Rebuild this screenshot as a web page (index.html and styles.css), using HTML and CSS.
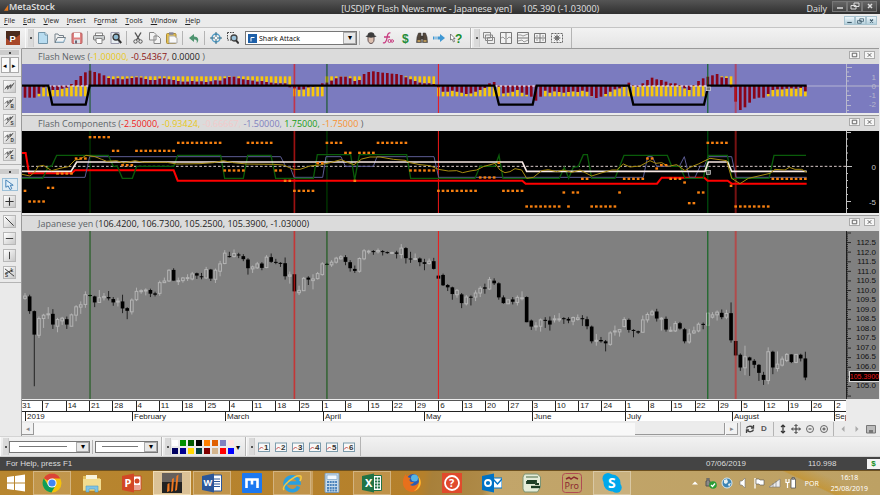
FILE: index.html
```html
<!DOCTYPE html>
<html lang="en">
<head>
  <meta charset="UTF-8">
  <meta name="viewport" content="width=device-width, initial-scale=1.0">
  <title>MetaStock</title>
  <link rel="stylesheet" href="styles.css">
</head>
<body>
  <header class="titlebar">
    <div class="brand">
      <svg class="brand-mark" viewBox="0 0 6 8"><path d="M0 8L5 1V8z" fill="#e07820"/></svg>MetaStock
    </div>
    <h1 class="doc-title"><span>[USDJPY Flash News.mwc - Japanese yen]</span><span>105.390 (-1.03000)</span></h1>
    <span class="period">Daily</span>
    <div class="win-controls">
      <button aria-label="Minimize"><svg viewBox="0 0 12 8"><path d="M3 6H9" stroke-width="1.5"/></svg></button>
      <button aria-label="Restore"><svg viewBox="0 0 12 8"><path d="M5 1H10V4.500H5zM2 3.500H7V7H2z"/></svg></button>
      <button aria-label="Close"><svg viewBox="0 0 12 8"><path d="M4 2L8 6M8 2L4 6" stroke-width="1.500"/></svg></button>
    </div>
  </header>

  <nav class="menubar">
    <button><u>F</u>ile</button>
    <button><u>E</u>dit</button>
    <button><u>V</u>iew</button>
    <button><u>I</u>nsert</button>
    <button>F<u>o</u>rmat</button>
    <button><u>T</u>ools</button>
    <button><u>W</u>indow</button>
    <button><u>H</u>elp</button>
    <div class="child-controls">
      <button aria-label="Minimize chart"><svg viewBox="0 0 12 8"><path d="M3 6H9" stroke-width="1.5"/></svg></button>
      <button aria-label="Restore chart"><svg viewBox="0 0 12 8"><path d="M5 1H10V4.500H5zM2 3.500H7V7H2z"/></svg></button>
      <button aria-label="Close chart"><svg viewBox="0 0 12 8"><path d="M4 2L8 6M8 2L4 6" stroke-width="1.500"/></svg></button>
    </div>
  </nav>

  <div class="toolbar">
    <button class="power" aria-label="Power console"><svg viewBox="0 0 12 12"><rect width="12" height="12" fill="#4a2a1c"/><path d="M0 12V6L4 9L12 3V12z" fill="#a8482a"/><text x="3" y="9" class="ico-text" fill="#fff">P</text></svg></button>
    <div class="tool-group">
      <i class="grip"></i>
      <button aria-label="New"><svg viewBox="0 0 12 12"><path d="M1.500 .5H8L10.500 3V11.500H1.500z" fill="#b8dcf0" stroke="#7396aa"/><path d="M8 .5V3H10.500" fill="#fff" stroke="#7396aa"/></svg></button>
      <button aria-label="Open"><svg viewBox="0 0 12 12"><path d="M1 10.500V2H4L5 3.500H9.500V5.500M1 10.500L3.500 5.500H11.500L9.500 10.500z" fill="#f2f2f2" stroke="#75818a"/><path d="M2 10H9.500L11 6.500" fill="none" stroke="#9cc4dc"/></svg></button>
      <button aria-label="Save"><svg viewBox="0 0 12 12"><rect x="1" y="1" width="10" height="10.500" rx="1" fill="#e08080" stroke="#b86060"/><rect x="3" y="1" width="6" height="4.500" fill="#fafafa"/><rect x="3" y="7.500" width="6" height="4" fill="#dce4e8"/><rect x="4" y="8.500" width="2" height="3" fill="#667"/></svg></button>
      <i class="sep"></i>
      <button aria-label="Print"><svg viewBox="0 0 12 12"><path d="M2.500 4V1H9.500V4" fill="#fff" stroke="#888"/><rect x=".5" y="3.500" width="11" height="4.500" rx="1" fill="#c9cccd" stroke="#777"/><path d="M3 6.500H9V11.500H4.500L3 10z" fill="#fff" stroke="#888"/></svg></button>
      <button aria-label="Print preview"><svg viewBox="0 0 12 12"><path d="M1 .5H9V11.500H1z" fill="#e8eef2" stroke="#99a"/><circle cx="6" cy="5" r="3" fill="#8cb8d0" stroke="#333" stroke-width="1.300"/><path d="M8.200 7.300L11.200 11" stroke="#333" stroke-width="2"/></svg></button>
      <i class="sep"></i>
      <button aria-label="Cut"><svg viewBox="0 0 12 12" fill="none" stroke="#555"><path d="M3 .5L7.500 8M9 .5L4.500 8" stroke-width="1.400"/><circle cx="3.500" cy="9.500" r="1.700"/><circle cx="8.500" cy="9.500" r="1.700"/></svg></button>
      <button aria-label="Copy"><svg viewBox="0 0 12 12" fill="#f3f3f3" stroke="#888"><path d="M.5 .5H5L7 2.500V8H.5zM5 4H9L11.500 6.500V11.500H5z"/></svg></button>
      <button aria-label="Paste"><svg viewBox="0 0 12 12"><rect x=".5" y="1.500" width="9.500" height="10" rx="1" fill="#e4bf4c" stroke="#a98b3c"/><rect x="3" y=".3" width="4.500" height="2.500" fill="#889"/><path d="M3 4H8.500L11 6.500V11H3z" fill="#f8f8f8" stroke="#aaa"/></svg></button>
      <i class="sep"></i>
      <button aria-label="Undo"><svg viewBox="0 0 12 12"><path d="M1 6L6 2V4.500C10 4.500 12 8 8.500 11.500C9.500 8.500 8.500 7.500 6 7.500V10z" fill="#4e9470"/></svg></button>
      <i class="sep"></i>
      <button aria-label="Crosshair"><svg viewBox="0 0 12 12" fill="none"><circle cx="6" cy="6" r="4" stroke="#4d9cc8" stroke-width="1.400"/><path d="M6 0V12M0 6H12" stroke="#33667f"/><circle cx="6" cy="6" r="1.200" fill="#fff"/></svg></button>
      <button aria-label="Zoom box"><svg viewBox="0 0 12 12" fill="none"><path d="M.5 .5H8M.5 .5V8H4" stroke="#444" stroke-dasharray="1.500 1"/><circle cx="7" cy="6" r="3" fill="#9cc4dc" stroke="#444" stroke-width="1.300"/><path d="M9 8.300L11.700 11.500" stroke="#333" stroke-width="2"/></svg></button>
      <label class="combo template">
        <svg viewBox="0 0 9 9"><rect width="9" height="9" fill="#1d5fa8"/><path d="M3 7.500V3.500H6.500" stroke="#fff" fill="none"/></svg>
        <select aria-label="Template"><option>Shark Attack</option></select>
      </label>
      <i class="sep"></i>
      <button aria-label="Expert advisor"><svg viewBox="0 0 12 12"><path d="M3 4H9V8C9 10 7.500 11.500 6 11.500S3 10 3 8z" fill="#dcc0b0" stroke="#655"/><path d="M.5 4.500C1 3.500 2 3.500 2.500 3.500C2.500 1 4 .3 6 .3S9.500 1 9.500 3.500C10 3.500 11 3.500 11.500 4.500C8 6 4 6 .5 4.500z" fill="#3c3c3c"/></svg></button>
      <button aria-label="Indicator builder"><svg viewBox="0 0 12 12" fill="none" stroke="#c83c80"><path d="M8.500 1C6 0 5.500 3 5 6S3 12 1 10.500M2 5H8" stroke-width="1.300"/><circle cx="7.500" cy="9" r="1.500"/><circle cx="10.200" cy="9" r="1.300"/></svg></button>
      <button aria-label="System tester"><svg viewBox="0 0 12 12"><text x="3" y="10.500" class="ico-dollar" fill="#248c38">$</text></svg></button>
      <button aria-label="Explorer"><svg viewBox="0 0 12 12" fill="#54483c" stroke="#333" stroke-width=".5"><path d="M2.500 1H5V5L5.500 10.500H.5L1 5zM7 1H9.500L11 5L11.500 10.500H6.500L7 5zM5 4H7V7H5z"/><path d="M1.500 9H4.500M7.500 9H10.500" stroke="#d8b060" stroke-width="1.500"/></svg></button>
      <button aria-label="Forecaster"><svg viewBox="0 0 12 12"><path d="M0 4.500H7V2L12 6L7 10V7.500H0z" fill="#3f98d4"/><path d="M2 4V8M4 4V8" stroke="#ececec"/></svg></button>
      <button aria-label="Help pointer"><svg viewBox="0 0 12 12"><path d="M.5 2L.5 8L2 7L3.500 10L4.500 9.500L3.500 6.500H5z" fill="#fff" stroke="#555" stroke-width=".7"/><text x="5" y="10.500" class="ico-dollar" fill="#168c28">?</text></svg></button>
    </div>
    <div class="tool-group">
      <i class="grip"></i>
      <button aria-label="Cascade"><svg viewBox="0 0 12 12" fill="#eee" stroke="#888"><path d="M.5 .5H7.500V6H.5zM2.500 3H9.500V8.500H2.500zM4.500 5.500H11.500V11.500H4.500z"/></svg></button>
      <button aria-label="Tile columns"><svg viewBox="0 0 12 12" fill="#f2f2f2" stroke="#777"><path d="M.5 .5H11.500V11.500H.5zM6 .5V11.500"/><path d="M1 6L3 5L5 7M7 7L9 5L11 6" stroke="#999" fill="none"/></svg></button>
      <button aria-label="Stack rows"><svg viewBox="0 0 12 12" fill="#f2f2f2" stroke="#777"><path d="M.5 .5H11.500V11.500H.5zM.5 6H11.500"/><path d="M1 3L4 3L6 4L11 2M1 9L5 8L7 10L11 8" stroke="#999" fill="none"/></svg></button>
      <button aria-label="Tile grid"><svg viewBox="0 0 12 12" fill="#f2f2f2" stroke="#777"><path d="M.5 1.500H11.500V10.500H.5zM6 1.500V10.500M.5 6H11.500"/><path d="M2 4H4M8 4H10M2 8H4M8 8H10" stroke="#999"/></svg></button>
      <button aria-label="Layout options"><svg viewBox="0 0 12 12" fill="none" stroke="#666"><path d="M.5 1.500H11.500V10.500H.5z" fill="#f2f2f2" stroke-dasharray="2 1"/><circle cx="6" cy="6" r="2"/><path d="M6 2.500V9.500M2.500 6H9.500M3.500 3.500L8.500 8.500M8.500 3.500L3.500 8.500" stroke-width=".8"/></svg></button>
    </div>
  </div>

  <main class="workspace">
    <aside class="rail">
      <div class="rail-group">
        <i class="grip-h"></i>
        <div class="pager">
          <button aria-label="Previous">&#9666;</button>
          <button aria-label="Next">&#9656;</button>
        </div>
      </div>
      <div class="rail-group">
        <button aria-label="Recalculate"><svg viewBox="0 0 12 12"><path class="scribble" d="M1 9L4 5L4 9L7 4L7 8L11 2M2 7L10 4"/></svg></button>
        <button aria-label="Buy signal"><svg viewBox="0 0 12 12"><path class="scribble" d="M1 6L4 3L4 6L7 2L7 5L10 1M2 10L9 2"/><text x="7" y="11" class="ico-tiny">B</text></svg></button>
        <button aria-label="Sell signal"><svg viewBox="0 0 12 12"><path class="scribble" d="M1 6L4 3L4 6L7 2L7 5L10 1M2 10L9 2"/><text x="7" y="11" class="ico-tiny">S</text></svg></button>
        <button aria-label="Stop signal"><svg viewBox="0 0 12 12"><path class="scribble" d="M1 6L4 3L4 6L7 2L7 5L10 1M2 10L9 2"/><text x="7" y="11" class="ico-tiny">D</text></svg></button>
        <button aria-label="Exit signal"><svg viewBox="0 0 12 12"><path class="scribble" d="M1 6L4 3L4 6L7 2L7 5L10 1M2 10L9 2"/><text x="7" y="11" class="ico-tiny">E</text></svg></button>
      </div>
      <div class="rail-group">
        <i class="grip-h"></i>
        <button class="selected" aria-label="Pointer"><svg viewBox="0 0 12 12"><path d="M2 1V9L4.500 7.500L6.500 11.500L8.500 10.500L6.800 6.800H10z" fill="#e4f2fc" stroke="#3878b0"/></svg></button>
        <button aria-label="Crosshair cursor"><svg viewBox="0 0 12 12"><path d="M6 1.500V10.500M1.500 6H10.500" stroke="#333" stroke-width="1.200"/></svg></button>
      </div>
      <div class="rail-group">
        <button aria-label="Trendline"><svg viewBox="0 0 12 12"><path d="M1.500 1.500L10.500 10.500" stroke="#333"/></svg></button>
        <button aria-label="Horizontal line"><svg viewBox="0 0 12 12"><path d="M2 6H10" stroke="#333"/></svg></button>
        <button aria-label="Vertical line"><svg viewBox="0 0 12 12"><path d="M6 2V10" stroke="#333"/></svg></button>
        <button aria-label="Short long line"><svg viewBox="0 0 12 12"><path d="M1 2L11 10M1 7L10 3" stroke="#333"/><text x="1" y="11" class="ico-tiny">S</text><text x="7" y="5" class="ico-tiny">L</text></svg></button>
      </div>
    </aside>

    <section class="charts">
      <div class="pane-head">
        <h2>Flash News (<b class="c-yellow">-1.00000, </b><b class="c-maroon">-0.54367, </b><b class="c-black">0.0000 </b>)</h2>
        <button aria-label="Maximize pane"><svg viewBox="0 0 10 8"><path d="M2.500 2H7.500V6H2.500z"/></svg></button>
        <button aria-label="Close pane"><svg viewBox="0 0 10 8"><path d="M3 2L7 6M7 2L3 6"/></svg></button>
      </div>
      <div class="pane pane-news">
        <svg class="plot" id="news" viewBox="66 192 2472 147" preserveAspectRatio="none"></svg>
        <div class="scale scale-news">
          <svg viewBox="0 0 33 49"><path d="M.5 0V49M0 3.500H6M0 12.500H5M0 22H33M0 31.500H5M0 41.500H5M0 8H3M0 17H3M0 27H3M0 36.500H3M0 46.500H3"/></svg>
          <span>1</span><span>0</span><span>-1</span><span>-2</span>
        </div>
      </div>

      <div class="pane-head">
        <h2>Flash Components (<b class="c-red">-2.50000, </b><b class="c-yellow">-0.93424, </b><b class="c-pink">-0.66667, </b><b class="c-blue">-1.50000, </b><b class="c-green">1.75000, </b><b class="c-orange">-1.75000 </b>)</h2>
        <button aria-label="Maximize pane"><svg viewBox="0 0 10 8"><path d="M2.500 2H7.500V6H2.500z"/></svg></button>
        <button aria-label="Close pane"><svg viewBox="0 0 10 8"><path d="M3 2L7 6M7 2L3 6"/></svg></button>
      </div>
      <div class="pane pane-components">
        <svg class="plot" id="components" viewBox="66 33 2472 246" preserveAspectRatio="none"></svg>
        <div class="scale scale-components">
          <svg viewBox="0 0 33 82"><path d="M.5 0V82M0 1.500H5M0 35.500H6M0 70.500H5M0 8H2M0 15H2M0 22H2M0 29H2M0 42.500H2M0 49.500H2M0 56.500H2M0 63.500H2M0 77.500H2"/></svg>
          <span>0</span><span>-5</span>
        </div>
      </div>

      <div class="pane-head">
        <h2>Japanese yen (<b class="c-black">106.4200, 106.7300, 105.2500, 105.3900, -1.03000)</b></h2>
        <button aria-label="Maximize pane"><svg viewBox="0 0 10 8"><path d="M2.500 2H7.500V6H2.500z"/></svg></button>
        <button aria-label="Close pane"><svg viewBox="0 0 10 8"><path d="M3 2L7 6M7 2L3 6"/></svg></button>
      </div>
      <div class="pane pane-price">
        <svg class="plot" id="price" viewBox="66 -27 2472 501" preserveAspectRatio="none"></svg>
        <div class="scale scale-price">
          <svg id="priceTicks" viewBox="0 0 33 167" preserveAspectRatio="none"></svg>
          <span>112.5</span><span>112.0</span><span>111.5</span><span>111.0</span><span>110.5</span><span>110.0</span><span>109.5</span><span>109.0</span><span>108.5</span><span>108.0</span><span>107.5</span><span>107.0</span><span>106.5</span><span>106.0</span><span></span><span>105.0</span>
          <strong class="last-price">105.3900</strong>
        </div>
      </div>

      <div class="dates">
        <div class="days" id="days"></div>
        <div class="months">
          <span></span><span>2019</span><span>February</span><span>March</span><span>April</span><span>May</span><span>June</span><span>July</span><span>August</span><span>Sep</span>
        </div>
      </div>

      <div class="scroll-row">
        <button class="scroll-btn" aria-label="Scroll left">&#9666;</button>
        <div class="scroll-track"><div class="scroll-thumb"></div></div>
        <button class="scroll-btn" aria-label="Scroll right">&#9656;</button>
        <i class="sep"></i>
        <button aria-label="Refresh"><svg viewBox="0 0 10 10" fill="none" stroke="#444" stroke-width="1.300"><path d="M1.500 4.500C2 2 6 1.500 8 3.500M8.500 5.500C8 8 4 8.500 2 6.500"/><path d="M8.500 1V4H6M1.500 9V6H4"/></svg></button>
        <button class="periodicity" aria-label="Periodicity">D</button>
        <i class="sep"></i>
        <button class="narrow" aria-label="Fit height"><svg viewBox="0 0 10 10"><path d="M5 1V9M3 3L5 1L7 3M3 7L5 9L7 7" stroke="#333" fill="none" stroke-width="1.200"/></svg></button>
        <button aria-label="Pan"><svg viewBox="0 0 10 10"><path d="M5 1V9M1 5H9M3.500 2L5 .5L6.500 2M3.500 8L5 9.500L6.500 8M2 3.500L.5 5L2 6.500M8 3.500L9.500 5L8 6.500" stroke="#333" fill="none"/></svg></button>
        <button aria-label="Zoom out"><svg viewBox="0 0 10 10" fill="none" stroke="#666"><circle cx="5" cy="5" r="3.500"/><path d="M3.500 5H6.500" stroke-width="1.300"/></svg></button>
        <button aria-label="Zoom in"><svg viewBox="0 0 10 10" fill="none" stroke="#666"><circle cx="5" cy="5" r="3.500"/><path d="M3.500 5H6.500M5 3.500V6.500" stroke-width="1.300"/></svg></button>
        <i class="sep"></i>
        <button aria-label="Previous chart"><svg viewBox="0 0 10 10"><path d="M6.500 2V8L3.500 5z" fill="#aaa"/></svg></button>
        <button aria-label="Next chart"><svg viewBox="0 0 10 10"><path d="M3.500 2V8L6.500 5z" fill="#aaa"/></svg></button>
        <button aria-label="Chart list"><svg viewBox="0 0 10 10"><path d="M.5 1.500H9.500V9H.5z" fill="#bbb" stroke="#777"/><path d="M3 6H7V9H3z" fill="#777"/></svg></button>
      </div>
    </section>
  </main>

  <div class="toolbar format-bar">
    <div class="tool-group">
      <i class="grip"></i>
      <label class="combo line-combo"><select aria-label="Line style"><option></option></select></label>
      <i class="sep"></i>
      <label class="combo line-combo weight"><select aria-label="Line weight"><option></option></select></label>
    </div>
    <div class="tool-group">
      <i class="grip"></i>
      <div class="palette" id="palette"></div>
      <button class="more" aria-label="More colors">&#9662;</button>
    </div>
    <div class="tool-group" id="templates">
      <i class="grip"></i>
    </div>
  </div>

  <footer class="status">
    <span class="hint">For Help, press F1</span>
    <span class="cursor-date">07/06/2019</span>
    <span class="cursor-price">110.998</span>
    <span class="dollar">$</span>
  </footer>

  <nav class="taskbar">
    <button class="start" aria-label="Start"><svg viewBox="0 0 18 18" fill="#fff"><path d="M0 3L7 2V8.500H0zM8 2L18 .5V8.500H8zM0 9.500H7V16L0 15zM8 9.500H18V17.500L8 16z"/></svg></button>
    <button class="task open" aria-label="Chrome"><svg viewBox="0 0 20 20"><circle cx="10" cy="10" r="9.500" fill="#f4c20d"/><path d="M10 10L1.800 5.200A9.500 9.500 0 0 1 18.300 5.500H10z" fill="#db4437"/><path d="M1.800 5.200A9.500 9.500 0 0 0 9.500 19.500L13.500 12.500L6 12z" fill="#0f9d58"/><circle cx="10" cy="10" r="4.600" fill="#fff"/><circle cx="10" cy="10" r="3.600" fill="#4285f4"/></svg></button>
    <button class="task" aria-label="Explorer"><svg viewBox="0 0 20 20"><path d="M1 3H7L8 5H18V18H1z" fill="#e4c05c"/><path d="M4 2H15V8H4z" fill="#f8f4dc"/><path d="M1 6H19V17H1z" fill="#f2dc90"/><path d="M4 19V13H16V19H13V16H7V19z" fill="#80c4e4" stroke="#4f9cc4" stroke-width=".6"/></svg></button>
    <button class="task" aria-label="PowerPoint"><svg viewBox="0 0 20 20"><path d="M11 3H19V17H11z" fill="#fff" stroke="#d24726"/><circle cx="15" cy="8" r="2.500" fill="#d24726"/><path d="M12 13H18M12 15H18" stroke="#d24726"/><path d="M0 3L12 .5V19.500L0 17z" fill="#d24726"/><text x="2.500" y="14" class="logo-text">P</text></svg></button>
    <button class="task active" aria-label="MetaStock"><svg viewBox="0 0 20 20"><rect width="20" height="20" fill="#222"/><rect width="20" height="9" fill="#66605c"/><path d="M5 19L5.500 11L7.500 10V18zM9 19L10 6L12 5L11 18zM13 18L14.500 3L16.500 1.500L15 17z" fill="#f07820"/></svg></button>
    <button class="task open" aria-label="Word"><svg viewBox="0 0 20 20"><path d="M10 2H19.500V18H10z" fill="#fff" stroke="#2b579a"/><path d="M12 6H18M12 8.500H18M12 11H18M12 13.500H18" stroke="#2b579a"/><path d="M0 3L12 .5V19.500L0 17z" fill="#2b579a"/><text x="1.500" y="13" class="logo-text small">W</text></svg></button>
    <button class="task" aria-label="Maxthon"><svg viewBox="0 0 20 20"><rect width="20" height="20" rx="1" fill="#1c78f0"/><path d="M4.500 15V6.500H15.500V15M10 7V11.500" stroke="#fff" stroke-width="2.600" fill="none"/></svg></button>
    <button class="task open stacked" aria-label="Internet Explorer"><svg viewBox="0 0 20 20" fill="none"><path d="M16.500 13.500A7 7 0 1 1 17 10H5.500" stroke="#2a9fe0" stroke-width="3.600"/><path d="M2 17C-1 13 14 1 18.500 3C20 4 18.500 7 18 8" stroke="#f4c840" stroke-width="1.600"/></svg></button>
    <button class="task" aria-label="Calculator"><svg viewBox="0 0 20 20"><rect x="3" y="0" width="14" height="19.500" rx="1" fill="#c8dcec" stroke="#7898b4"/><rect x="5" y="2" width="10" height="4.500" fill="#f0f8ff" stroke="#6a94bc" stroke-width=".6"/><path d="M5 9H15M5 12H15M5 15H15M5 17.500H15" stroke="#4c84bc" stroke-width="1.800" stroke-dasharray="2 .7"/></svg></button>
    <button class="task open" aria-label="Excel"><svg viewBox="0 0 20 20"><path d="M10 2.500H19.500V17.500H10z" fill="#fff" stroke="#217346"/><path d="M13 5.500H18M13 8.500H18M13 11.500H18M13 14.500H18" stroke="#217346" stroke-width="1.800" stroke-dasharray="2.200 .7"/><path d="M0 3L12 .5V19.500L0 17z" fill="#217346"/><text x="3" y="14" class="logo-text">X</text></svg></button>
    <button class="task" aria-label="Firefox"><svg viewBox="0 0 20 20"><circle cx="10" cy="10" r="9" fill="#e8701c"/><circle cx="11" cy="7.500" r="6.500" fill="#2c5cb0"/><circle cx="12.500" cy="5" r="3.500" fill="#56b4e4"/><path d="M1 8C1 5 3 2 4 1C4 4 6 4 9 5.500C7 6 7 8 9 9H12C11 11 9 11 8 12C11 14 15 12 17 9L16 15L8 18L2 14z" fill="#e8701c"/><path d="M16 3C21 8 19 16 12 18C17 14 18 9 16 3z" fill="#f8c030"/></svg></button>
    <button class="task" aria-label="Help"><svg viewBox="0 0 20 20"><rect width="20" height="20" fill="#e04a2c"/><circle cx="10" cy="10" r="7" fill="none" stroke="#fff" stroke-width="1.800"/><text x="7" y="14" class="logo-text">?</text></svg></button>
    <button class="task" aria-label="Outlook"><svg viewBox="0 0 20 20"><path d="M11 5H20V15H11z" fill="#fff" stroke="#0072c6"/><path d="M11 6L15.500 11L20 6" stroke="#0072c6" fill="none" stroke-width="1.500"/><path d="M0 3L12 .5V19.500L0 17z" fill="#0072c6"/><circle cx="6" cy="10" r="3" fill="none" stroke="#fff" stroke-width="1.800"/></svg></button>
    <button class="task" aria-label="Trading platform"><svg viewBox="0 0 20 20"><path d="M2.500 1H15.500L18.500 4V14L15.500 19H2.500L1 16V4z" fill="#e4ecd8" stroke="#7c9474"/><path d="M4 4H16" stroke="#7c9474" stroke-width="1.500"/><path d="M5 8H14V11H17M5 8V10H13" stroke="#1c3c24" stroke-width="1.800" fill="none"/><path d="M9 14H18" stroke="#1c3c24" stroke-width="2.400"/></svg></button>
    <button class="task" aria-label="Pro"><svg viewBox="0 0 20 20"><rect x=".5" y=".5" width="19" height="19" rx="3" fill="none" stroke="#b04c54"/><path d="M4 6L7 4.500L9 6L12 4L16 6" stroke="#8c2830" stroke-width="1.500" fill="none"/><text x="2.500" y="16" class="pro-text">Pro</text></svg></button>
    <button class="task open" aria-label="Skype"><svg viewBox="0 0 20 20" fill="#00a8ec"><circle cx="10" cy="10" r="8.500"/><circle cx="6" cy="5.500" r="5.500"/><circle cx="14.500" cy="14.500" r="5.200"/><text x="6" y="15" class="skype-text">S</text></svg></button>
    <div class="tray">
      <svg viewBox="0 0 12 12"><path d="M3 7.500L6 4.500L9 7.500z" fill="#fff"/></svg>
      <svg viewBox="0 0 12 12"><path d="M2 1V4H1V9H5V4H4V1" fill="#888" stroke="#555"/><circle cx="8" cy="8" r="3.800" fill="#2a9c34"/><path d="M6 8L7.500 9.500L10 6.500" stroke="#fff" fill="none" stroke-width="1.300"/></svg>
      <svg viewBox="0 0 12 12"><circle cx="6" cy="6" r="5" fill="#3c84b4" stroke="#d8e8f0"/><path d="M3 3L6 2L7 5L5 7L3 6zM7 7L10 6L8 10z" fill="#e8f0f0"/></svg>
      <svg viewBox="0 0 12 12"><path d="M3 4H5L8 1V11L5 8H3z" fill="#fff" stroke="#777" stroke-width=".6"/></svg>
      <svg viewBox="0 0 12 12"><path d="M2 1V11.500" stroke="#fff" stroke-width="1.300"/><path d="M3 2H6L7 3H11V8H7L6 7H3z" fill="#fff" stroke="#555" stroke-width=".6"/></svg>
      <svg viewBox="0 0 12 12"><path d="M0 10L11 2V10z" fill="#eee" stroke="#777" stroke-width=".6"/><path d="M4 6V10M7 4V10" stroke="#777" stroke-width=".6"/></svg>
      <svg viewBox="0 0 12 12"><path d="M6 2H10.500V11H6zM7 .5H9.500V2H7z" fill="#fff" stroke="#555" stroke-width=".8"/><path d="M2.500 11V6M1 2V5.500H4V2" stroke="#fff" fill="none" stroke-width="1.200"/></svg>
      <span class="lang">POR</span>
      <time class="clock">16:18<br>25/08/2019</time>
    </div>
  </nav>

  <script src="charts.js"></script>
</body>
</html>
```
FILE: styles.css
```css
:root {
  --chrome: #ebebeb;
  --line: #b4b4b4;
  --ui: "Noto Sans", "Open Sans", sans-serif;
  --arial: "Liberation Sans", Arial, sans-serif;
}

* {
  box-sizing: border-box;
}

body {
  margin: 0;
  min-height: 100vh;
  display: flex;
  flex-direction: column;
  background-color: var(--chrome);
  color: #222;
  font-family: var(--ui);
  font-size: 8px;
}

button {
  display: flex;
  align-items: center;
  justify-content: center;
  padding: 0;
  border: none;
  background: none;
  color: inherit;
  font: inherit;
}

h1, h2 {
  margin: 0;
  font-weight: normal;
}

svg {
  display: block;
}

.ico-text { font: bold 8px var(--arial); }
.ico-dollar { font: bold 12px var(--arial); }
.ico-tiny { font: bold 5px var(--arial); fill: #333; }
.scribble { fill: none; stroke: #555; stroke-width: 1; }
.logo-text { font: bold 11px var(--ui); fill: #fff; }
.logo-text.small { font-size: 9px; }
.pro-text { font: 9px var(--ui); fill: #8c2830; }
.skype-text { font: bold 14px var(--ui); fill: #fff; }

/* title bar */
.titlebar {
  display: flex;
  align-items: center;
  height: 14px;
  background: linear-gradient(#555, #303030);
  color: #e4e4e4;
}

.brand {
  display: flex;
  align-items: center;
  width: 60px;
  padding-left: 4px;
  font: 600 9px/12px "Open Sans", sans-serif;
}

.brand-mark {
  width: 5px;
  height: 7px;
}

.doc-title {
  flex: 1;
  display: flex;
  justify-content: center;
  gap: 10px;
  padding-left: 74px;
  padding-top: 3px;
  font: 9px/14px "Open Sans", sans-serif;
}

.period {
  margin-right: 5px;
  padding-top: 3px;
  font: 9px/14px "Open Sans", sans-serif;
}

.win-controls,
.child-controls {
  display: flex;
  margin-right: 3px;
}

.win-controls button {
  width: 15px;
  height: 11px;
  margin-top: -2px;
  border: 1px solid #777;
  background: linear-gradient(#666, #444);
}

.win-controls svg,
.child-controls svg {
  width: 12px;
  height: 8px;
  fill: none;
  stroke: #ddd;
}

/* menu */
.menubar {
  display: flex;
  align-items: center;
  gap: 8px;
  height: 14px;
  padding-left: 4px;
  border-bottom: 1px solid #c4c4c4;
  font: 7px "Open Sans", sans-serif;
}

.child-controls {
  margin-left: auto;
}

.child-controls button {
  width: 11px;
  height: 9px;
  border: 1px solid #a9c4d0;
  background: linear-gradient(#eef6fa, #b4d0dc);
}

.child-controls svg {
  stroke: #3c5868;
}

/* toolbars */
.toolbar {
  display: flex;
  align-items: stretch;
  height: 20px;
  background: linear-gradient(#f2f2f2, #e4e4e4);
}

.toolbar button {
  width: 17px;
}

.toolbar button svg {
  width: 12px;
  height: 12px;
}

.toolbar .power {
  width: 25px;
}

.toolbar .power svg {
  width: 14px;
  height: 14px;
}

.tool-group {
  display: flex;
  align-items: center;
  padding-right: 6px;
  border-left: 1px solid #fafafa;
  border-right: 1px solid var(--line);
}

.grip {
  align-self: stretch;
  width: 6px;
  margin: 1px 0 1px 2px;
  border-right: 1px solid #ccc;
  background: radial-gradient(circle, #555 1px, transparent 1px) center / 4px 4px no-repeat, #dadada;
}

.sep {
  width: 1px;
  height: 14px;
  margin: 0 2px;
  background-color: var(--line);
}

.combo {
  display: flex;
  align-items: center;
  border: 1px solid #777;
  background-color: #fff;
}

.combo select {
  flex: 1;
  min-width: 0;
  align-self: stretch;
  padding: 0 0 0 2px;
  border: none;
  border-radius: 0;
  appearance: none;
  background: none;
  color: #111;
  font: 7px var(--ui);
}

.combo::after {
  content: "▾";
  align-self: stretch;
  width: 11px;
  border: 1px solid #aaa;
  background-color: #e8e8e8;
  color: #000;
  font-size: 8px;
  line-height: 8px;
  text-align: center;
}

.template {
  width: 112px;
  height: 14px;
  margin-left: 4px;
  padding-left: 2px;
}

.template svg {
  width: 9px;
  height: 9px;
}

/* workspace */
.workspace {
  flex: 1;
  display: flex;
}

.rail {
  width: 22px;
  border-right: 1px solid #999;
  border-top: 1px solid #ccc;
  background-color: #eaeaea;
}

.rail-group {
  display: flex;
  flex-direction: column;
  align-items: center;
  gap: 4px;
  margin-bottom: 3px;
  padding: 0 2px 3px 0;
  border-bottom: 1px solid var(--line);
}

.rail-group > button {
  width: 13px;
  height: 13px;
  border: 1px solid #b8b8b8;
  background: linear-gradient(135deg, #fff, #c8c8c8);
}

.rail-group > .selected {
  width: 16px;
  border-color: #9cc0d8;
  background: #e0ecf4;
}

.rail-group svg {
  width: 11px;
  height: 11px;
}

.grip-h {
  width: 19px;
  height: 5px;
  margin-top: 1px;
  background: radial-gradient(circle, #444 1px, transparent 1px) center / 4px 4px no-repeat, #ccc;
}

.pager {
  display: flex;
  margin-top: -2px;
}

.pager button {
  width: 9px;
  height: 16px;
  border: 1px solid #aaa;
  background-color: #fafafa;
  color: #000;
  font-size: 7px;
}

.charts {
  flex: 1;
  min-width: 0;
  display: flex;
  flex-direction: column;
  margin-right: 1px;
}

.pane-head {
  display: flex;
  align-items: center;
  gap: 4px;
  height: 16px;
  padding: 0 4px 0 16px;
  background-color: #dbdbdb;
  border-top: 1px solid #999;
}

.pane-head h2 {
  flex: 1;
  color: #5c6468;
  font: 9px/14px "Open Sans", sans-serif;
  white-space: pre;
}

.pane-head b {
  font-weight: normal;
}

.pane-head button {
  width: 11px;
  height: 8px;
  margin-bottom: 4px;
  border: 1px solid #aaa;
  background-color: #f6f6f6;
}

.pane-head svg {
  width: 10px;
  height: 8px;
  fill: none;
  stroke: #555;
}

.c-yellow { color: #e8c818; }
.c-maroon { color: #8c1414; }
.c-black { color: #222; }
.c-red { color: #f01c1c; }
.c-pink { color: #f2caca; }
.c-blue { color: #8080c0; }
.c-green { color: #189c18; }
.c-orange { color: #f89030; }

.pane {
  display: flex;
  margin-bottom: 2px;
}

.plot {
  flex: 1;
  min-width: 0;
  height: 100%;
}

.pane-news {
  height: 49px;
  background-color: #7b7bbf;
  color: #b8b8cc;
}

.pane-components {
  height: 82px;
  background-color: #000;
  color: #c0c0c0;
}

.pane-price {
  flex: 1;
  min-height: 167px;
  margin-bottom: 1px;
  background-color: #808080;
  color: #111;
}

.pane-price .plot {
  height: auto;
}

.scale {
  position: relative;
  display: flex;
  flex-direction: column;
  width: 33px;
  padding-right: 3px;
  font: 8px/9px var(--arial);
  text-align: right;
}

/* ticks lie under the labels */
.scale svg {
  position: absolute;
  inset: 0;
  width: 100%;
  height: 100%;
  fill: none;
  stroke: currentColor;
}

.scale-news {
  padding-top: 9px;
}

.scale-components {
  gap: 26px;
  padding-top: 32px;
}

.scale-price {
  justify-content: space-between;
  padding-top: 7px;
  padding-bottom: 9px;
}

.scale span {
  min-height: 9px;
}

.last-price {
  position: absolute;
  right: 0;
  bottom: 17px;
  border: 1px solid #ddd;
  border-right: none;
  background-color: #000;
  color: #f01818;
  font: 7px/9px var(--arial);
}

/* date axis */
.dates {
  margin-right: 33px;
  border-top: 1px solid #555;
  background-color: #fff;
  color: #222;
  font: 8px/10px var(--arial);
}

.days,
.months {
  display: grid;
  height: 10px;
  overflow: hidden;
}

.days {
  grid-template-columns: minmax(0, 7fr) repeat(34, minmax(0, 8fr)) minmax(0, 4fr);
}

.months {
  grid-template-columns: 3fr 107fr 93fr 98fr 101fr 108fr 93fr 107fr 102fr minmax(0, 12fr);
  border-top: 1px solid #222;
}

.days span,
.months span {
  padding-left: 1px;
  border-left: 1px solid #222;
  overflow: hidden;
}

.days span:first-child {
  border-left: none;
  padding-left: 0;
}

.months span:first-child {
  border-left: none;
}

.months span:last-child {
  padding-left: 0;
}

.scroll-row {
  display: flex;
  align-items: center;
  height: 15px;
  padding-right: 1px;
}

.scroll-row button {
  width: 14px;
  height: 12px;
}

.scroll-row button.narrow {
  width: 13px;
}

.scroll-row svg {
  width: 10px;
  height: 10px;
}

.scroll-row .scroll-btn {
  width: 12px;
  border: 1px solid #999;
  border-width: 0 1px 1px 0;
  background-color: #f2f2f2;
  color: #888;
  font-size: 7px;
}

.scroll-track {
  flex: 1;
  height: 12px;
  display: flex;
  justify-content: flex-end;
  background-color: #f8f8f8;
}

.scroll-thumb {
  width: 13%;
  margin-right: 1px;
  border: 1px solid #999;
  border-width: 0 1px 1px 0;
  background-color: #ececec;
}

.scroll-row .periodicity {
  font: bold 8px var(--arial);
  color: #555;
}

/* formatting bar */
.format-bar {
  height: 21px;
  border-top: 1px solid #d4d4d4;
  border-bottom: 1px solid #d0d0d0;
}

.format-bar .tool-group {
  padding-right: 3px;
}

.line-combo {
  width: 81px;
  height: 12px;
}

.line-combo select {
  margin: 0 9px;
  background: linear-gradient(#777, #777) center / 100% 1px no-repeat;
}

.line-combo::after {
  line-height: 6px;
}

.weight {
  width: 63px;
}

.weight select {
  margin: 0 6px;
}

.palette {
  display: grid;
  grid-template-columns: repeat(8, 6px);
  grid-auto-rows: 6px;
  gap: 2px;
  margin-left: 1px;
}

.toolbar .palette button {
  width: 6px;
  height: 6px;
}

.toolbar .more {
  width: 8px;
  color: #000;
}

.t-num {
  font: bold 8px var(--arial);
  fill: #333;
}

/* status */
.status {
  display: flex;
  align-items: center;
  height: 13px;
  padding-left: 6px;
  background-color: #444;
  color: #ddd;
  font: 8px/12px var(--arial);
}

.hint {
  flex: 1;
}

.cursor-date {
  margin-right: 62px;
}

.cursor-price {
  width: 59px;
}

.dollar {
  width: 13px;
  background-color: #f4f4f4;
  color: #109020;
  font-weight: bold;
  line-height: 10px;
  text-align: center;
}

/* taskbar */
.taskbar {
  display: flex;
  height: 25px;
  border-top: 1px solid #6c5020;
  background:
    linear-gradient(25deg, transparent 72%, rgba(200, 140, 20, 0.5) 73%, transparent 82%) right / 300px 100% no-repeat,
    linear-gradient(100deg, #b8862f 0%, #b5802b 48%, #a8803a 49%, #ae8a48 55%, #c2a56a 56%, #bda164 100%);
}

.taskbar .start {
  width: 32px;
}

.start svg {
  width: 18px;
  height: 18px;
}

.task {
  width: 38px;
  margin: 0 1px;
  border: 1px solid transparent;
}

.task svg {
  width: 20px;
  height: 20px;
}

.task.open {
  border-color: rgba(255, 255, 255, 0.3);
  background-color: rgba(255, 255, 255, 0.14);
}

.task.active {
  border-color: #f0dcb4;
  background-color: rgba(255, 255, 255, 0.5);
}

.task.stacked {
  box-shadow: 2px 0 0 rgba(255, 255, 255, 0.25);
}

.tray {
  display: flex;
  align-items: center;
  gap: 4px;
  margin-left: auto;
  padding-right: 12px;
  color: #fff;
  font: 7px/11px var(--ui);
}

.tray svg {
  width: 12px;
  height: 12px;
}

.lang {
  margin: 0 8px 0 4px;
}

.clock {
  text-align: center;
}
```
FILE: charts.js
```javascript
// One trading day is STEP units wide, three units per screen pixel.
const STEP = 13.935;
const FIRST = 75;
const x = i => FIRST + STEP * i;

const rect = (cx, y, w, h, fill) =>
  `<rect x="${cx - w / 2}" y="${y}" width="${w}" height="${h}" fill="${fill}"/>`;
const line = (points, color, width) =>
  `<polyline points="${points}" fill="none" stroke="${color}" stroke-width="${width}"/>`;

// [day, color, width, opacity]
const signals = [
  [14, '#005000', 4, 0.65], [58, '#e01818', 5, 0.7], [65, '#005000', 5, 0.55],
  [89, '#f01818', 3, 1], [147, '#006010', 3, 1], [153, '#d82020', 6, 0.55]
];

function signalLines(top, height) {
  return signals.map(([i, color, w, o]) => `<g opacity="${o}">${rect(x(i), top, w, height, color)}</g>`).join('');
}

// Flash News histogram
const ZERO = 257;
const news = [
  293, 293, 293, 281, 262, 257, 270, 270, 266, 263, 252, 240, 228, 217, 212, 216, 220, 226, 234, 238,
  235, 238, 236, 234, 232, 233, 237, 240, 240, 236, 235, 238, 240, 243, 245, 245, 243, 245, 244, 246,
  244, 241, 242, 235, 231, 230, 235, 238, 240, 242, 245, 243, 246, 248, 250, 250, 250, 262, 265, 269,
  268, 262, 260, 258, 250, 248, 242, 235, 230, 230, 235, 243, 240, 222, 216, 214, 216, 218, 219, 221,
  222, 225, 232, 238, 243, 248, 250, 250, 252, 262, 275, 275, 272, 275, 278, 282, 280, 275, 270, 264,
  250, 246, 260, 280, 278, 275, 270, 278, 284, 290, 302, 290, 272, 278, 274, 276, 278, 276, 274, 276,
  272, 275, 288, 294, 290, 282, 275, 268, 265, 260, 248, 255, 260, 250, 240, 233, 238, 240, 245, 250,
  250, 255, 265, 270, 255, 243, 235, 230, 226, 222, 232, 234, 262, 305, 330, 322, 308, 296, 293, 293,
  282, 270, 268, 268, 266, 265, 266, 264, 274
];
const isUp = i => (i >= 14 && i <= 57) || (i >= 65 && i <= 88) || (i >= 147 && i <= 152);

let out = line('66,258 2538,258', '#b4b4d4', 3);
news.forEach((v, i) => {
  // the yellow bar only shows past the end of the red one
  if (isUp(i)) {
    const end = Math.min(v, ZERO);
    if (end > 229) out += rect(x(i), 229, 8, end - 229, '#f8c80c');
  } else {
    const start = Math.max(v, ZERO);
    if (start < 289) out += rect(x(i), start, 8, 289 - start, '#f8c80c');
  }
  out += rect(x(i), Math.min(v, ZERO), 8, Math.abs(ZERO - v), '#8a0418');
});
out += signalLines(192, 147);
[[145, 269], [1485, 1610], [1887, 2125]].forEach(([a, b]) => {
  out += `<path d="M${a} 258H${b}" stroke="#d8c8dc" stroke-width="5" stroke-dasharray="7 7"/>`;
});
out += line('66,257 145,257 157,314 257,314 269,257 1483,257 1497,314 1598,314 1610,257 1887,257 1900,314 2112,314 2125,257 2420,257', '#000', 7);
out += '<rect x="2119" y="261" width="12" height="11" fill="#777" stroke="#ddd" stroke-width="2"/>';
document.getElementById('news').innerHTML = out;

// Flash Components
const orange = [
  [0, 0, 212], [1, 4, 244], [5, 6, 203], [7, 10, 160], [11, 13, 115], [14, 18, 51], [19, 20, 92],
  [21, 23, 135], [24, 32, 92], [33, 42, 68], [43, 47, 151], [48, 53, 68], [54, 55, 151], [56, 57, 182],
  [58, 62, 212], [63, 64, 129], [65, 68, 68], [69, 70, 98], [71, 71, 182], [72, 75, 98], [76, 82, 68],
  [83, 88, 151], [89, 97, 212], [98, 101, 172], [102, 102, 128], [103, 107, 212], [108, 115, 259],
  [116, 116, 217], [117, 117, 259], [118, 119, 217], [120, 121, 176], [122, 127, 259], [128, 128, 217],
  [129, 133, 176], [134, 135, 115], [136, 136, 145], [137, 138, 135], [139, 141, 176], [142, 142, 187],
  [143, 144, 249], [145, 146, 217], [147, 151, 68], [152, 152, 197], [153, 160, 259], [161, 168, 176]
];

out = '<path d="M66 139H2538" stroke="#d8c8c8" stroke-width="3" stroke-dasharray="8 6"/>';
out += signalLines(33, 246);
out += line('66,99 77,99 87,160 215,160 225,151 521,151 533,182 1567,182 1577,191 1971,191 1985,173 2113,173 2123,182 2183,182 2195,191 2420,191', '#f00', 6);
out += line('66,172 255,172 269,110 842,110 857,139 870,140 882,172 968,172 978,110 1023,110 1036,139 1120,139 1131,110 1302,110 1316,172 1930,172 1943,110 1957,110 1970,139 2038,139 2053,110 2068,172 2085,172 2100,139 2113,139 2125,110 2195,110 2208,172 2420,172', '#5c5c94', 3);
out += line('66,175 128,175 145,139 155,139 170,106 325,106 340,139 352,139 367,175 397,175 410,139 521,139 533,106 662,106 674,175 730,175 743,106 813,106 827,175 940,175 952,104 1052,104 1064,180 1078,104 1220,104 1232,175 1425,175 1440,139 1485,139 1497,106 1509,175 1678,175 1693,142 1706,175 1720,142 1735,139 1750,104 1762,104 1775,175 1845,175 1872,106 2002,106 2015,139 2040,139 2055,175 2110,175 2125,106 2182,106 2196,175 2307,175 2322,106 2418,106', '#0a5c0a', 4);
out += line('66,154 213,154 230,126 1567,126 1580,154 2115,154 2125,126 2183,126 2195,154 2420,154', '#f8e8e4', 5);
out += line('66,163 90,168 105,155 115,139 130,136 155,152 180,145 205,140 225,120 240,118 258,106 285,110 305,118 320,124 350,122 370,129 405,122 430,127 500,127 530,132 600,131 640,128 670,122 700,128 740,132 820,133 850,135 880,148 900,148 930,138 960,135 990,128 1023,119 1045,128 1062,134 1085,117 1110,111 1140,111 1180,118 1215,121 1230,128 1260,134 1290,137 1315,148 1345,153 1370,152 1388,158 1410,153 1430,150 1450,140 1485,130 1500,150 1515,158 1530,155 1545,146 1565,150 1580,175 1600,172 1625,152 1645,149 1670,155 1690,150 1715,157 1740,150 1775,168 1800,160 1835,150 1850,150 1870,132 1890,141 1920,138 1950,122 1968,130 1985,128 2005,139 2030,134 2055,152 2070,142 2095,132 2115,122 2130,115 2180,122 2195,175 2220,191 2245,175 2280,167 2310,160 2325,148 2355,150 2368,142 2385,148 2405,148 2420,157', '#a88c10', 3);
orange.forEach(([from, to, y]) => {
  for (let i = from; i <= to; i++) out += rect(x(i), y - 3, 8, 7, '#f88010');
});
out += '<rect x="2119" y="151" width="12" height="12" fill="#555" stroke="#ddd" stroke-width="2"/>';
document.getElementById('components').innerHTML = out;

// Candles: [high, body top, body bottom, low, 1 = up day]
const candles = [
  [158,167,174,178,1],[163,168,212,220,0],[210,212,282,436,0],[228,234,284,292,1],[220,224,234,262,1],
  [200,220,221,235,1],[206,220,252,265,0],[232,237,257,275,1],[229,233,241,253,1],[228,236,252,265,0],
  [219,223,257,257,1],[194,199,224,242,1],[183,193,200,220,1],[153,163,192,202,1],[163,164,167,168,0],
  [166,168,186,200,0],[149,172,186,186,1],[158,168,172,180,1],[152,170,174,180,0],[170,176,186,196,0],
  [172,182,184,198,1],[163,183,204,218,0],[200,203,211,236,0],[174,179,214,222,1],[142,153,178,182,1],
  [147,151,154,160,1],[144,149,150,165,1],[145,149,160,170,0],[154,159,163,168,0],[121,127,159,166,1],
  [112,122,127,128,1],[87,90,122,125,1],[84,89,121,121,0],[112,121,123,134,1],[110,113,121,127,1],
  [102,112,115,122,1],[95,101,116,120,1],[97,99,106,116,0],[98,108,110,117,0],[80,88,113,116,1],
  [86,88,115,122,0],[85,90,117,128,1],[62,71,93,108,1],[30,39,70,72,1],[35,48,50,52,0],
  [28,40,49,52,1],[38,43,46,54,0],[42,48,57,63,0],[54,58,84,103,0],[76,80,86,98,1],
  [65,71,83,86,1],[66,70,83,90,0],[45,51,82,84,1],[40,51,65,68,0],[56,65,67,72,0],
  [66,68,70,80,0],[52,69,108,118,0],[94,104,108,130,1],[102,102,153,153,0],[136,150,157,164,1],
  [110,114,151,151,1],[108,112,118,134,0],[102,116,121,147,1],[95,100,115,118,1],[66,71,103,106,1],
  [68,71,72,74,0],[60,66,74,80,1],[50,54,66,70,1],[45,50,56,58,1],[45,51,65,75,0],
  [60,66,84,94,0],[76,86,92,98,0],[52,55,93,97,1],[27,32,56,60,1],[29,33,36,42,1],
  [30,33,34,44,0],[25,31,35,40,1],[30,33,36,46,0],[34,36,39,41,0],[35,37,40,42,1],
  [32,37,41,55,0],[12,24,43,55,1],[21,24,54,70,0],[35,55,58,68,0],[40,55,58,60,1],
  [52,55,66,78,0],[56,66,71,90,0],[55,63,70,73,1],[53,63,86,88,0],[105,106,115,116,0],
  [100,104,135,137,0],[131,134,141,152,0],[139,141,161,178,0],[146,150,163,172,1],[158,162,188,203,0],
  [164,170,190,195,1],[165,169,171,195,0],[150,158,170,182,1],[138,144,158,170,1],[130,141,145,160,0],
  [110,118,146,148,1],[114,121,129,134,0],[126,129,171,178,0],[165,171,188,190,0],[178,178,190,190,1],
  [170,177,184,192,0],[165,171,186,195,1],[153,172,174,180,1],[168,170,245,245,0],[237,240,258,268,0],
  [245,256,259,270,1],[234,238,257,273,1],[230,238,240,262,0],[228,240,252,270,0],[224,235,238,246,1],
  [218,235,237,244,1],[230,233,235,250,0],[230,235,240,248,0],[228,231,242,254,1],[222,232,237,240,1],
  [224,233,236,256,0],[228,236,257,266,0],[255,258,302,308,0],[280,299,301,315,1],[289,298,302,306,0],
  [298,302,308,332,0],[272,277,311,315,1],[255,271,274,285,1],[265,267,274,288,1],[230,237,258,260,1],
  [234,238,268,276,0],[266,268,271,290,0],[270,272,276,280,0],[225,238,275,275,1],[216,222,238,246,1],
  [208,214,223,225,1],[205,213,234,243,0],[230,233,236,270,1],[228,235,267,273,0],[258,269,271,274,1],
  [242,249,271,274,1],[244,248,264,267,0],[262,266,302,308,0],[265,280,304,309,1],[258,271,277,280,1],
  [246,251,271,275,1],[246,250,252,266,0],[216,218,254,254,1],[215,223,230,234,1],[210,215,223,240,1],
  [207,217,230,236,0],[208,219,230,236,1],[186,218,299,306,0],[301,301,344,344,0],[338,342,380,390,0],
  [315,348,381,403,1],[348,350,359,405,0],[355,360,372,382,0],[370,372,396,420,0],[393,402,417,432,0],
  [320,333,419,430,1],[330,333,380,400,0],[332,370,383,392,1],[347,355,373,377,1],[337,341,359,364,1],
  [341,341,364,367,0],[341,341,365,367,1],[339,342,353,362,0],[333,353,410,418,0]
];

out = '';
candles.forEach(([high, top, bottom, low, up], i) => {
  const height = Math.max(bottom - top, 3);
  if (up) {
    out += rect(x(i), high, 3, top - high, '#b0b0b0') + rect(x(i), bottom, 3, low - bottom, '#b0b0b0');
    out += `<rect x="${x(i) - 4}" y="${top}" width="8" height="${height}" fill="none" stroke="#b4b4b4" stroke-width="3"/>`;
  } else {
    out += rect(x(i), high, 3, low - high, '#222') + rect(x(i), top, 11, height, '#000');
  }
});
out += signalLines(-27, 501);
document.getElementById('price').innerHTML = out;

// Price scale: a tick for every 0.1, longer ones at each half point
let ticks = 'M.5 0V167';
for (let n = -5; n <= 80; n++) {
  ticks += `M0 ${(11.5 + n * 1.907).toFixed(1)}H${n % 5 === 0 ? 5 : 2}`;
}
document.getElementById('priceTicks').innerHTML = `<path d="${ticks}" stroke-width=".8"/>`;

const days = [31, 7, 14, 21, 28, 4, 11, 18, 25, 4, 11, 18, 25, 1, 8, 15, 22, 29, 6, 13, 20, 27, 3, 10, 17, 24, 1, 8, 15, 22, 29, 5, 12, 19, 26, 2];
document.getElementById('days').innerHTML = days.map(d => `<span>${d}</span>`).join('');

const colors = [
  'white', '#009000', '#005800', 'black', '#ff8000', '#e06000', '#8080c0', '#ffe4e1',
  '#000060', '#000090', '#ffd700', '#004040', '#800000', '#d2b48c', 'red', 'blue'
];
document.getElementById('palette').innerHTML =
  colors.map(c => `<button aria-label="${c}" style="background-color: ${c}"></button>`).join('');

document.getElementById('templates').innerHTML += [1, 2, 3, 4, 5, 6].map(n => `
  <button aria-label="Template ${n}"><svg viewBox="0 0 12 12">
    <rect x=".5" y="2" width="11" height="8.500" fill="#f8f8f8" stroke="#7c9cac"/>
    <path d="M1 8.500L3.500 6L5 7.500" stroke="#c84848" fill="none"/><text x="6" y="9" class="t-num">${n}</text>
  </svg></button>`).join('');
```
